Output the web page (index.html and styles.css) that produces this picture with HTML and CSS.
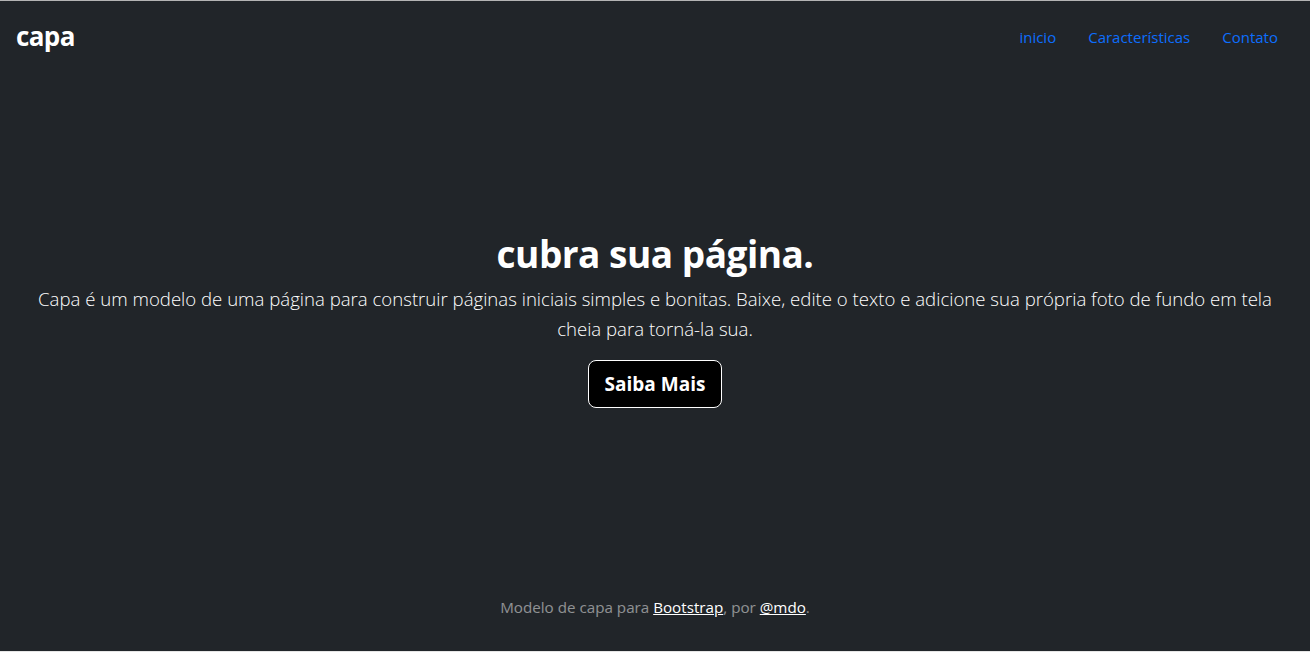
FILE: index.html
```html
<!DOCTYPE html>
<html lang="pt-BR">
<head>
<meta charset="utf-8">
<title>Capa</title>
<link rel="stylesheet" href="styles.css">
</head>
<body>
<div class="cover">
  <header class="masthead">
    <h3 class="brand">capa</h3>
    <nav class="nav">
      <a class="nav-link" href="#">inicio</a>
      <a class="nav-link" href="#">Características</a>
      <a class="nav-link" href="#">Contato</a>
    </nav>
  </header>
  <main class="hero">
    <h1 class="title">cubra sua página.</h1>
    <p class="lead">Capa é um modelo de uma página para construir páginas iniciais simples e bonitas. Baixe, edite o texto e adicione sua própria foto de fundo em tela cheia para torná-la sua.</p>
    <a class="btn" href="#">Saiba Mais</a>
  </main>
  <footer class="foot">
    <p>Modelo de capa para <a href="#">Bootstrap</a>, por <a href="#">@mdo</a>.</p>
  </footer>
</div>
</body>
</html>
```
FILE: styles.css
```css
* { box-sizing: border-box; }
html, body { height: 100%; margin: 0; }
body {
  background: #212529;
  color: #fff;
  font-family: "Open Sans", "Noto Sans", sans-serif;
  font-size: 16px;
  line-height: 1.5;
  border-top: 1px solid #b4b4b4;
  border-bottom: 1px solid #e6e6e6;
}
.cover {
  display: flex;
  flex-direction: column;
  height: 100%;
  padding: 16px;
  text-align: center;
}
.masthead {
  display: flex;
  justify-content: space-between;
  align-items: center;
  margin-bottom: auto;
}
.brand {
  margin: 0;
  font-size: 26px;
  font-weight: 700;
  line-height: 1.2;
  letter-spacing: -0.6px;
}
.nav { display: flex; padding-top: 1px; }
.nav-link {
  color: #0d6efd;
  text-decoration: none;
  padding: 8px 16px;
  font-size: 15px;
}
.hero { padding: 0 16px; margin-bottom: 13px; }
.title {
  margin: 0 0 8px;
  font-size: 37px;
  font-weight: 700;
  line-height: 45px;
  letter-spacing: -0.5px;
}
.lead {
  margin: 0 0 16px;
  font-size: 18.6px;
  font-weight: 300;
  line-height: 30px;
}
.btn {
  display: inline-block;
  background: #000;
  color: #fff;
  border: 1px solid #fff;
  border-radius: 8px;
  padding: 8px 16px;
  font-size: 19px;
  font-weight: 700;
  line-height: 30px;
  text-decoration: none;
}
.foot { margin-top: auto; color: rgba(255,255,255,.5); }
.foot p { margin: 0 0 16px; font-size: 15.2px; line-height: 24px; }
.foot a { color: #fff; text-decoration: underline; }
```
